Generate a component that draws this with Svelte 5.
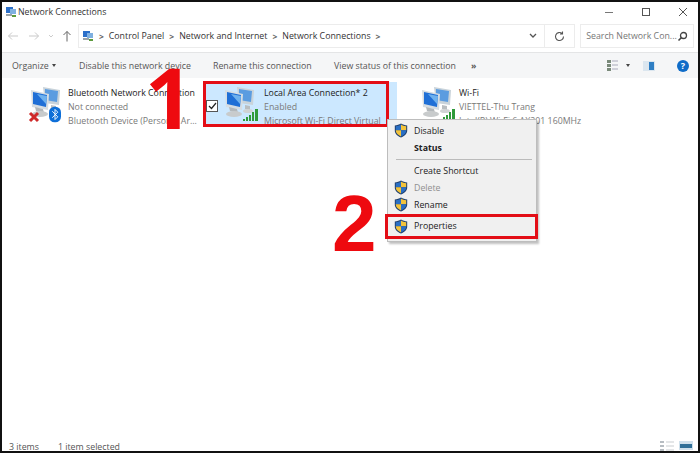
<script>
  const shieldItems = [
    { label: "Disable", shield: true },
    { label: "Status", bold: true },
    { sep: true },
    { label: "Create Shortcut" },
    { label: "Delete", shield: true, disabled: true },
    { label: "Rename", shield: true },
    { label: "Properties", shield: true, target: true }
  ]
  const commands = [
    { label: "Disable this network device", width: 134 },
    { label: "Rename this connection", width: 121 },
    { label: "View status of this connection", width: 137 }
  ]
</script>

{#snippet shield()}
  <svg class="shield" width="14" height="15" viewBox="0 0 14 15">
    <path d="M7 .5C5.2 1.700 3 2.300.8 2.400v5c0 3.300 2.600 5.700 6.200 7.100 3.600-1.400 6.200-3.800 6.200-7.100v-5C11 2.300 8.800 1.700 7 .5z" fill="#20406f" />
    <path d="M7 1.600v5.600H1.800V3.300C3.700 3.100 5.500 2.600 7 1.600z" fill="#2a6fc4" />
    <path d="M7 1.600c1.500 1 3.300 1.500 5.200 1.700v3.900H7z" fill="#f3c33a" />
    <path d="M1.800 7.200H7v6.200C4 12.200 2 10.200 1.800 7.500z" fill="#f3c33a" />
    <path d="M7 7.200h5.200v.3C12 10.200 10 12.200 7 13.400z" fill="#2a6fc4" />
  </svg>
{/snippet}

{#snippet computers()}
  <svg class="pcs" width="33" height="34" viewBox="0 0 33 34">
    <path d="M14 2l17 3-1 15-14-2z" fill="#c9d3da" />
    <path d="M16 4l13 2-1 11-12-2z" fill="#5b9ce0" />
    <path d="M2 5l18 4-1 16-16-3z" fill="#d6dde2" />
    <path d="M4 7l14 3-1 12-13-3z" fill="#1f6fd6" />
    <path d="M8 9l10 2-1 8z" fill="#6fb2ee" />
    <path d="M6 22l8 2 1 4-8-2z" fill="#b3b8bb" />
    <ellipse cx="11" cy="29" rx="8" ry="3" fill="#c8cbcc" />
    <path d="M22 20l5 1v4l-5-1z" fill="#b9bec1" />
    <ellipse cx="25" cy="26" rx="5" ry="2" fill="#d0d3d4" />
  </svg>
{/snippet}

{#snippet bars()}
  <svg class="bars" width="17" height="13" viewBox="0 0 17 13">
    <path d="M0 11h2v2H0zM3 9h2v4H3zM6 7h2v6H6zM9 4h2v9H9zM12 1h3v12h-3z" fill="#2f9a3a" />
  </svg>
{/snippet}

{#snippet netIcon()}
  <svg width="12" height="12" viewBox="0 0 12 12">
    <rect x="1" y="1" width="7" height="6" fill="#2b6fc9" />
    <rect x="5" y="3" width="6" height="5" fill="#7fb0e0" />
    <rect x="1" y="8" width="6" height="2" fill="#9aa2a8" />
    <rect x="7" y="9" width="4" height="2" fill="#5c9a3c" />
  </svg>
{/snippet}

<div class="window">
  <header class="titlebar">
    <div class="title">
      {@render netIcon()}
      <span>Network Connections</span>
    </div>
    <div class="controls">
      <svg width="12" height="12" viewBox="0 0 12 12"><path d="M2 6.500h8" stroke="#777" /></svg>
      <svg width="12" height="12" viewBox="0 0 12 12"><rect x="2.500" y="2.500" width="7" height="7" fill="none" stroke="#555" /></svg>
      <svg width="12" height="12" viewBox="0 0 12 12"><path d="M2 2l8 8M10 2l-8 8" stroke="#555" /></svg>
    </div>
  </header>

  <nav class="addressrow">
    <div class="navs">
      <svg width="12" height="10" viewBox="0 0 12 10"><path d="M11 5H1.500M5 1.500L1.500 5 5 8.500" fill="none" stroke="#c9c9c9" /></svg>
      <svg width="12" height="10" viewBox="0 0 12 10"><path d="M1 5h9.500M7 1.500L10.500 5 7 8.500" fill="none" stroke="#c9c9c9" /></svg>
      <svg class="tiny" width="6" height="4" viewBox="0 0 6 4"><path d="M1 1l2 2 2-2" fill="none" stroke="#ccc" /></svg>
      <svg width="10" height="12" viewBox="0 0 10 12"><path d="M5 11.500V1.500M1.500 5L5 1.500 8.500 5" fill="none" stroke="#666" /></svg>
    </div>
    <div class="address">
      {@render netIcon()}
      <span class="crumb-sep">&gt;</span><span>Control Panel</span>
      <span class="crumb-sep">&gt;</span><span>Network and Internet</span>
      <span class="crumb-sep">&gt;</span><span>Network Connections</span>
      <span class="crumb-sep">&gt;</span>
      <svg class="chev" width="8" height="6" viewBox="0 0 8 6"><path d="M1 1l3 3 3-3" fill="none" stroke="#555" stroke-width="1.300" /></svg>
    </div>
    <div class="refresh">
      <svg width="11" height="11" viewBox="0 0 11 11"><path d="M9.500 5.500a4 4 0 1 1-1.400-3M8.500 .5v2.500H6" fill="none" stroke="#555" stroke-width="1.100" /></svg>
    </div>
    <div class="search">
      <span>Search Network Con...</span>
      <svg width="11" height="11" viewBox="0 0 11 11"><circle cx="6.500" cy="4.500" r="3" fill="none" stroke="#444" stroke-width="1.300" /><path d="M4.500 6.500L1.500 9.500" stroke="#444" stroke-width="1.600" /></svg>
    </div>
  </nav>

  <div class="toolbar">
    <span class="cmd organize">Organize <i class="caret"></i></span>
    {#each commands as cmd}
      <span class="cmd" style="width: {cmd.width}px">{cmd.label}</span>
    {/each}
    <span class="more">»</span>
    <div class="tool-right">
      <svg width="11" height="13" viewBox="0 0 11 13"><path d="M0 1h4v3H0zM0 5h4v3H0zM0 9h4v3H0z" fill="#7a8a7a" /><path d="M5 2h6M5 6h6M5 10h6" stroke="#aab" /></svg>
      <i class="caret dark"></i>
      <svg class="pane" width="12" height="10" viewBox="0 0 12 10"><rect width="12" height="10" fill="#dbe6ef" /><rect x="6" y="1" width="5" height="8" fill="#2f7fc4" /></svg>
      <span class="help">?</span>
    </div>
  </div>

  <main class="content">
    <div class="item first">
      <div class="icon">
        {@render computers()}
        <svg class="x" width="12" height="12" viewBox="0 0 12 12"><path d="M2 2l8 8M10 2l-8 8" stroke="#cf2a2a" stroke-width="3" /></svg>
        <svg class="bt" width="12" height="17" viewBox="0 0 13 17"><rect width="13" height="17" rx="6" fill="#0e6fd8" /><path d="M3.500 5l6 6-3 3V3l3 3-6 6" fill="none" stroke="#fff" /></svg>
      </div>
      <div class="text">
        <div class="name">Bluetooth Network Connection</div>
        <div>Not connected</div>
        <div>Bluetooth Device (Personal Ar...</div>
      </div>
    </div>

    <div class="item selected">
      <span class="check">
        <svg width="9" height="8" viewBox="0 0 9 8"><path d="M1 4l2.500 2.500L8 1" fill="none" stroke="#222" stroke-width="1.200" /></svg>
      </span>
      <div class="icon">
        {@render computers()}
        {@render bars()}
      </div>
      <div class="text">
        <div class="name">Local Area Connection* 2</div>
        <div>Enabled</div>
        <div>Microsoft Wi-Fi Direct Virtual</div>
      </div>
      <span class="redbox"></span>
    </div>

    <div class="item wifi">
      <div class="icon">
        {@render computers()}
        {@render bars()}
      </div>
      <div class="text">
        <div class="name">Wi-Fi</div>
        <div>VIETTEL-Thu Trang</div>
        <div>Intel(R) Wi-Fi 6 AX201 160MHz</div>
      </div>
    </div>

    <ul class="menu">
      {#each shieldItems as it}
        {#if it.sep}
          <li class="sep"></li>
        {:else}
          <li class:bold={it.bold} class:disabled={it.disabled} class:target={it.target}>
            <span class="gutter">{#if it.shield}{@render shield()}{/if}</span>
            {it.label}
          </li>
        {/if}
      {/each}
    </ul>

    <span class="num one">1</span>
    <span class="num two">2</span>
  </main>

  <footer class="status">
    <span>3 items</span>
    <span class="selcount">1 item selected</span>
    <div class="views">
      <svg width="14" height="11" viewBox="0 0 14 11"><path d="M0 1h4v2H0zM0 5h4v2H0zM0 9h4v2H0z" fill="#b7bdc2" /><path d="M6 2h8M6 6h8M6 10h8" stroke="#c9cdd0" /></svg>
      <svg width="14" height="11" viewBox="0 0 14 11"><rect y="1" width="14" height="9" fill="#cfe0ec" /><rect x="1" y="4" width="12" height="4" fill="#2f6f98" /></svg>
    </div>
  </footer>
</div>

<style>
  :global(body) {
    margin: 0;
  }

  .window {
    width: 700px;
    height: 453px;
    box-sizing: border-box;
    border: 2px solid #111;
    background: #fff;
    color: #444;
    font-family: "Open Sans", "Liberation Sans", Arial, sans-serif;
    font-size: 8.800px;
    display: flex;
    flex-direction: column;
    overflow: hidden;
  }

  .titlebar {
    height: 20px;
    flex: none;
    display: flex;
    align-items: center;
    justify-content: space-between;
    padding: 0 2px 0 3px;
  }

  .title {
    display: flex;
    align-items: center;
    gap: 1px;
    color: #333;
  }

  .controls {
    display: flex;
    gap: 25px;
    padding-right: 7px;
  }

  .addressrow {
    height: 30px;
    flex: none;
    display: flex;
    align-items: center;
    box-sizing: border-box;
    padding: 2px 4px 4px 5px;
  }

  .navs {
    width: 71px;
    display: flex;
    align-items: center;
    gap: 9px;
  }

  .navs .tiny {
    margin: 0 -1px;
  }

  .address {
    width: 468px;
    height: 100%;
    box-sizing: border-box;
    border: 1px solid #ececec;
    display: flex;
    align-items: center;
    gap: 5px;
    padding: 0 7px 0 3px;
    color: #333;
    white-space: nowrap;
  }

  .crumb-sep {
    font-size: 8.500px;
    font-weight: 700;
    color: #666;
  }

  .chev {
    margin-left: auto;
  }

  .refresh {
    width: 30px;
    height: 100%;
    box-sizing: border-box;
    border: 1px solid #ececec;
    border-left: 0;
    display: flex;
    align-items: center;
    justify-content: center;
  }

  .search {
    margin-left: 5px;
    width: 114px;
    height: 100%;
    box-sizing: border-box;
    border: 1px solid #ececec;
    display: flex;
    align-items: center;
    justify-content: space-between;
    padding: 0 5px;
    color: #777;
    white-space: nowrap;
  }

  .toolbar {
    height: 26px;
    flex: none;
    box-sizing: border-box;
    background: #f5f6f7;
    border-top: 1px solid #e4e5e6;
    display: flex;
    align-items: center;
    padding: 0 0 0 10px;
    color: #555;
  }

  .cmd {
    white-space: nowrap;
  }

  .organize {
    width: 67px;
    display: flex;
    align-items: center;
    gap: 3px;
  }

  .caret {
    display: inline-block;
    border: 2.500px solid transparent;
    border-top: 3px solid #444;
    border-bottom: 0;
  }

  .more {
    font-weight: 700;
  }

  .tool-right {
    margin-left: auto;
    display: flex;
    align-items: center;
    padding-right: 9px;
    gap: 8px;
  }

  .pane {
    margin-left: 5px;
    margin-right: 14px;
  }

  .help {
    width: 12px;
    height: 12px;
    border-radius: 50%;
    background: #0f6cc8;
    color: #fff;
    font-weight: 700;
    font-size: 9px;
    display: flex;
    align-items: center;
    justify-content: center;
  }

  .content {
    position: relative;
    flex: 1;
    display: flex;
    align-items: flex-start;
    padding: 4px 0 0 0;
  }

  .item {
    display: flex;
    height: 44px;
    box-sizing: border-box;
    position: relative;
    align-items: flex-start;
    white-space: nowrap;
    padding-top: 4px;
  }

  .first {
    width: 201px;
    padding-left: 25px;
  }

  .selected {
    width: 194px;
    background: #cce8ff;
    padding-left: 18px;
  }

  .wifi {
    padding-left: 21px;
  }

  .icon {
    position: relative;
    width: 39px;
    height: 38px;
    flex: none;
  }

  .pcs {
    position: absolute;
    left: 2px;
    top: -1px;
  }

  .bars {
    position: absolute;
    left: 22px;
    top: 22px;
  }

  .x {
    position: absolute;
    left: 1px;
    top: 25px;
  }

  .bt {
    position: absolute;
    left: 22px;
    top: 20px;
  }

  .text {
    line-height: 14px;
    color: #7a7a7a;
    margin-left: 2px;
  }

  .name {
    color: #222;
  }

  .selected .text {
    margin-left: 4px;
  }

  .check {
    position: absolute;
    left: 3px;
    top: 18px;
    width: 10px;
    height: 10px;
    border: 1px solid #555;
    background: #fff;
    display: flex;
    align-items: center;
    justify-content: center;
  }

  .redbox {
    position: absolute;
    left: 0;
    top: -1px;
    width: 186px;
    height: 46px;
    box-sizing: border-box;
    border: 3px solid #e30d16;
  }

  .menu {
    position: absolute;
    left: 385px;
    top: 41px;
    width: 150px;
    margin: 0;
    padding: 2px 0 3px;
    list-style: none;
    background: #f0f0f0;
    border: 1px solid #bdbdbd;
    box-shadow: 2px 2px 2px rgba(0, 0, 0, 0.25);
    color: #222;
    box-sizing: border-box;
  }

  .menu li {
    height: 17px;
    display: flex;
    align-items: center;
    position: relative;
  }

  .menu .sep {
    height: 1px;
    background: #bbb;
    margin: 3px 4px 2px 8px;
  }

  .gutter {
    width: 26px;
    display: flex;
    justify-content: center;
  }

  .bold {
    font-weight: 700;
  }

  .disabled {
    color: #8f8f8f;
  }

  .menu .target {
    height: 24px;
    margin-top: 1px;
  }

  .target::after {
    content: "";
    position: absolute;
    left: -3px;
    right: -2px;
    top: 0;
    bottom: -1px;
    border: 3px solid #e30d16;
  }

  .num {
    position: absolute;
    font-weight: 700;
    color: #ee0a0f;
    line-height: 1;
  }

  .one {
    font-family: "Open Sans", sans-serif;
    left: 143px;
    top: -23px;
    font-size: 84px;
  }

  .two {
    font-family: "Liberation Sans", Arial, sans-serif;
    left: 330px;
    top: 106px;
    font-size: 80px;
  }

  .status {
    height: 12px;
    flex: none;
    display: flex;
    align-items: flex-end;
    padding-left: 7px;
    color: #555;
    line-height: 7px;
  }

  .selcount {
    margin-left: 19px;
  }

  .views {
    margin-left: auto;
    display: flex;
    gap: 5px;
    padding-right: 5px;
  }
</style>
